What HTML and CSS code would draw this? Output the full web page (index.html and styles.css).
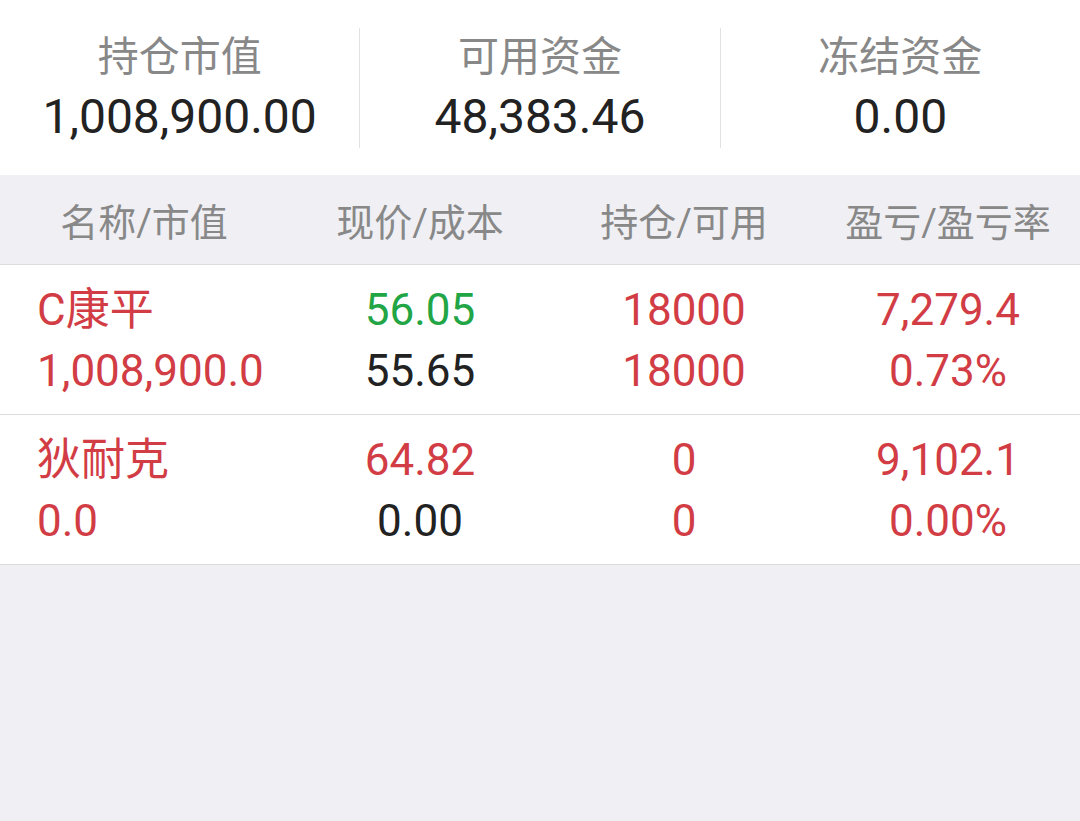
FILE: index.html
```html
<html>
<head>
	<title>持仓</title>
	<meta charset="UTF-8">
	<meta name="viewport" content="width=device-width, initial-scale=1.0"/>
	<link rel="stylesheet" href="styles.css">
</head>
<body>
	<div class="summary">
		<div class="cell">
			<p class="label">持仓市值</p>
			<p class="value">1,008,900.00</p>
		</div>
		<div class="cell">
			<p class="label">可用资金</p>
			<p class="value">48,383.46</p>
		</div>
		<div class="cell">
			<p class="label">冻结资金</p>
			<p class="value">0.00</p>
		</div>
	</div>

	<div class="head">
		<span>名称/市值</span>
		<span>现价/成本</span>
		<span>持仓/可用</span>
		<span>盈亏/盈亏率</span>
	</div>

	<div class="row">
		<div class="col first">
			<p class="red">C康平</p>
			<p class="red">1,008,900.0</p>
		</div>
		<div class="col">
			<p class="green">56.05</p>
			<p class="black">55.65</p>
		</div>
		<div class="col">
			<p class="red">18000</p>
			<p class="red">18000</p>
		</div>
		<div class="col">
			<p class="red">7,279.4</p>
			<p class="red">0.73%</p>
		</div>
	</div>
	<div class="row">
		<div class="col first">
			<p class="red">狄耐克</p>
			<p class="red">0.0</p>
		</div>
		<div class="col">
			<p class="red">64.82</p>
			<p class="black">0.00</p>
		</div>
		<div class="col">
			<p class="red">0</p>
			<p class="red">0</p>
		</div>
		<div class="col">
			<p class="red">9,102.1</p>
			<p class="red">0.00%</p>
		</div>
	</div>
</body>
</html>
```

FILE: styles.css
```css
*{
	margin: 0;
	padding: 0;
}
html,body{
	height: 100%;
}
body{
	background: #efeff4;
	font-family: Roboto, "Noto Sans CJK SC", sans-serif;
}
.summary{
	display: flex;
	height: 175px;
	align-items: center;
	background: #fff;
}
.cell{
	flex: 1;
	height: 120px;
	display: flex;
	flex-direction: column;
	align-items: center;
	justify-content: center;
	border-left: 1px solid #e2e2e2;
}
.cell:first-child{
	border-left: none;
}
.label{
	font-size: 41px;
	line-height: 58px;
	color: #888;
}
.value{
	font-size: 48px;
	line-height: 62px;
	color: #222;
}
.head{
	display: grid;
	grid-template-columns: 288px repeat(3, 1fr);
	height: 89px;
	align-items: center;
	border-bottom: 1px solid #dcdcdc;
	font-size: 38px;
	color: #888;
	text-align: center;
}
.row{
	display: grid;
	grid-template-columns: 288px repeat(3, 1fr);
	height: 150px;
	padding-top: 3px;
	box-sizing: border-box;
	align-content: center;
	background: #fff;
	border-bottom: 1px solid #dcdcdc;
}
.col{
	text-align: center;
	font-size: 44px;
	line-height: 61px;
}
.col.first{
	text-align: left;
	padding-left: 37px;
}
.red{
	color: #d23c44;
}
.green{
	color: #22a545;
}
.black{
	color: #222;
}
```
